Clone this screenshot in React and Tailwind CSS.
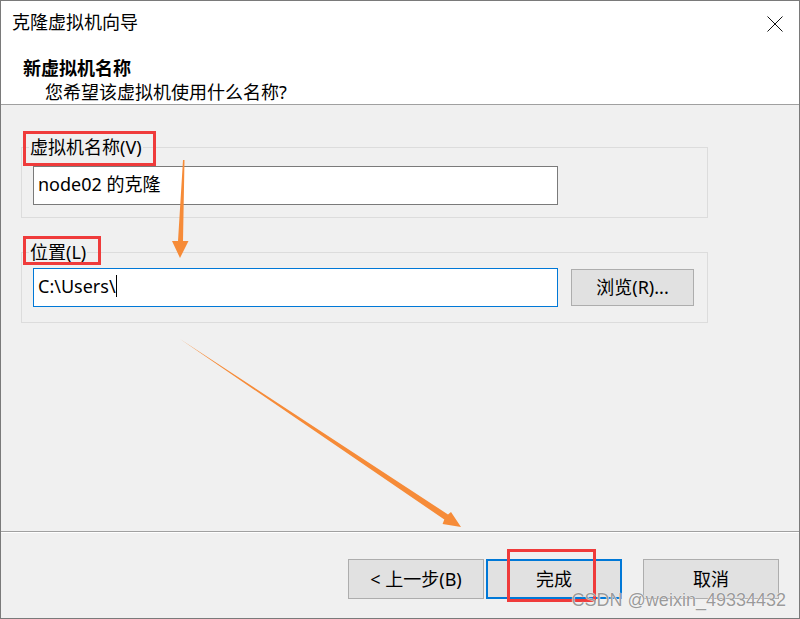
import React from "react";

const font = {
  fontFamily: '"Noto Sans", "Noto Sans CJK SC", sans-serif',
};

function CloseIcon() {
  return (
    <svg width="16" height="16" viewBox="0 0 16 16" className="block">
      <path d="M0.5 0.5 L15.5 15.5 M15.5 0.5 L0.5 15.5" stroke="#111" strokeWidth="1" fill="none" />
    </svg>
  );
}

function GroupBox({ label, className, children }) {
  return (
    <div className={`relative ml-[20px] w-[687px] h-[71px] border border-[#dcdcdc] ${className}`}>
      <div className="absolute left-[7px] -top-[13px] bg-[#f0f0f0] px-[1px] text-[18px] leading-[24px] text-black">
        {label}
      </div>
      {children}
    </div>
  );
}

function Btn({ children, primary }) {
  return (
    <div
      className={`h-[40px] flex items-center justify-center text-[18px] text-black ${
        primary
          ? "w-[136px] border-2 border-[#0078d7] bg-[#e1e1e1]"
          : "w-[136px] border border-[#adadad] bg-[#e1e1e1]"
      }`}
    >
      {children}
    </div>
  );
}

export default function App() {
  return (
    <div
      style={font}
      className="relative w-[800px] h-[619px] flex flex-col border border-[#7a7a7a] bg-[#f0f0f0] overflow-hidden"
    >
      {/* header */}
      <div className="h-[104px] bg-white border-b border-[#a0a0a0] flex flex-col">
        <div className="flex justify-between items-start pl-[11px] pr-[16px] pt-[9px]">
          <div className="text-[18px] leading-[24px] text-black">克隆虚拟机向导</div>
          <div className="pt-[6px]">
            <CloseIcon />
          </div>
        </div>
        <div className="pl-[22px] pt-[22px] text-[18px] leading-[24px] font-bold text-black">
          新虚拟机名称
        </div>
        <div className="pl-[44px] text-[18px] leading-[24px] text-black">
          您希望该虚拟机使用什么名称?
        </div>
      </div>

      {/* body */}
      <div className="flex-1 flex flex-col">
        <GroupBox label="虚拟机名称(V)" className="mt-[42px]">
          <div className="ml-[11px] mt-[18px] w-[525px] h-[39px] bg-white border border-[#7a7a7a] flex items-start pt-[4px] pl-[4px] text-[18px] leading-[26px] text-black">
            node02 的克隆
          </div>
        </GroupBox>
        <GroupBox label="位置(L)" className="mt-[34px]">
          <div className="flex items-start ml-[11px] mt-[15px]">
            <div className="w-[525px] h-[39px] bg-white border border-[#0078d7] flex items-start pt-[4px] pl-[4px] text-[18px] leading-[26px] text-black">
              C:\Users\
              <span className="inline-block mt-[2px] w-[1px] h-[22px] bg-black" />
            </div>
            <div className="ml-[13px] mt-[1px] w-[123px] h-[37px] bg-[#e1e1e1] border border-[#adadad] flex items-center justify-center text-[18px] text-black">
              浏览(R)...
            </div>
          </div>
        </GroupBox>
      </div>

      {/* footer */}
      <div className="h-[87px] border-t border-[#a0a0a0]">
        <div className="h-full border-t border-white flex justify-end items-start pt-[26px] pr-[20px]">
          <Btn>&lt; 上一步(B)</Btn>
          <div className="ml-[2px]">
            <Btn primary>完成</Btn>
          </div>
          <div className="ml-[21px]">
            <Btn>取消</Btn>
          </div>
        </div>
      </div>

      {/* annotations */}
      <div className="absolute left-[22px] top-[130px] w-[133px] h-[35px] border-[3px] border-[#ef3b3b]" />
      <div className="absolute left-[22px] top-[235px] w-[78px] h-[29px] border-[3px] border-[#ef3b3b]" />
      <div className="absolute left-[506px] top-[548px] w-[89px] h-[53px] border-[3px] border-[#ef3b3b]" />
      <svg className="absolute left-[-1px] top-[-1px] pointer-events-none" width="800" height="619">
        <polygon points="183,160 184.5,160 183,241 188.5,241 180,258 172,241 178,241" fill="#f68b38" />
        <polygon points="180,339 448,514.5 451,512 461,527 442.6,524 444.3,519.5" fill="#f68b38" />
      </svg>
      <div
        className="absolute right-[13px] bottom-[6px] text-[18px] leading-[24px] text-[#9a9a9a]"
        style={{
          fontFamily: '"Liberation Sans", Arial, sans-serif',
          textShadow: "0 0 1px #fff, 0 0 1px #fff",
        }}
      >
        CSDN @weixin_49334432
      </div>
    </div>
  );
}
